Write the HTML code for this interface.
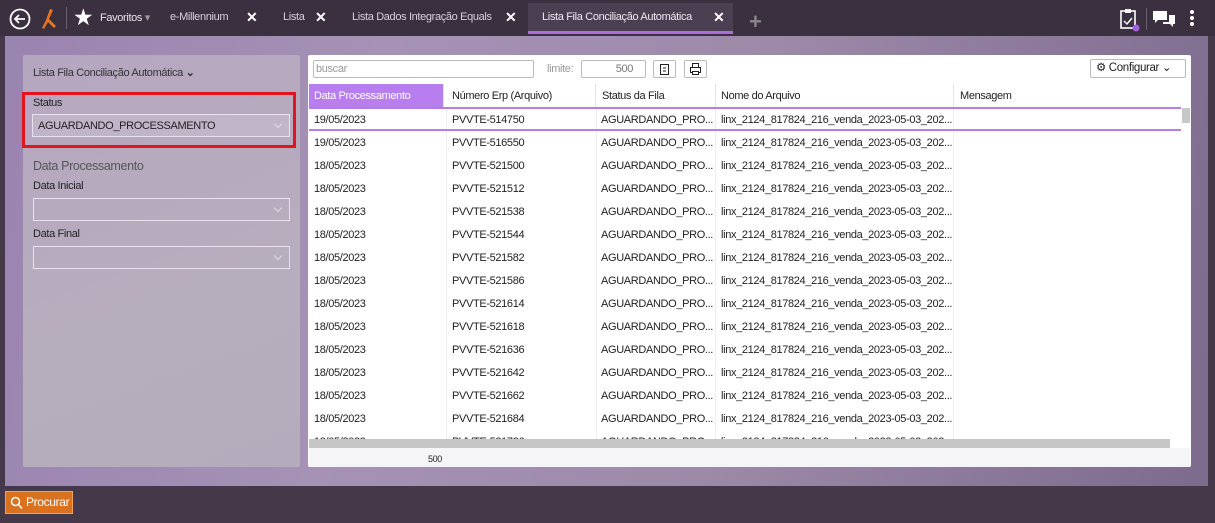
<!DOCTYPE html>
<html><head><meta charset="utf-8"><style>
*{box-sizing:border-box;margin:0;padding:0}
body{width:1215px;height:523px;overflow:hidden;background:#453848;font-family:"Liberation Sans",sans-serif;position:relative;font-size:11px;letter-spacing:-0.35px}
.top{position:absolute;left:0;top:0;width:1215px;height:36px;background:#3b3040}
.tab{position:absolute;top:11px;color:#d8d0dc;font-size:11px}
.x{position:absolute;top:9px;color:#fff;font-size:14px;font-weight:bold}
.main{position:absolute;left:5px;top:36px;width:1203px;height:450px;background:linear-gradient(100deg,#9a84b0 0%,#a592b5 30%,#9d8aa8 60%,#7d6b8e 100%)}
.lp{position:absolute;left:23px;top:55px;width:277px;height:412px;background:linear-gradient(160deg,#b5a6c0,#b7aebd 60%,#b4acbc);border-radius:2px}
.lbl{position:absolute;color:#222;font-size:11px}
.inp{position:absolute;border:1px solid #e8e2ec;height:23px}
.chev{position:absolute;right:8px;top:6px;width:6px;height:6px;border-right:1px solid #ddd;border-bottom:1px solid #ddd;transform:rotate(45deg)}
.rp{position:absolute;left:308px;top:55px;width:883px;height:412px;background:#fff;border-radius:2px}
.hdr{position:absolute;top:84px;height:23px;color:#222;font-size:11px;line-height:24px;padding-left:5px;border-right:1px solid #e4e4e4}
.row{position:absolute;left:309px;width:872px;height:23px;font-size:11px;color:#222;line-height:24px}
.row span{position:absolute;top:0}
.vl{position:absolute;top:107px;height:332px;width:1px;background:#eee}
</style></head><body>
<div class="top">
<svg style="position:absolute;left:9px;top:8px" width="22" height="22" viewBox="0 0 22 22"><circle cx="11" cy="11" r="9.5" fill="none" stroke="#fff" stroke-width="1.8"/><path d="M16 11H6M10 7l-4 4 4 4" fill="none" stroke="#fff" stroke-width="1.8"/></svg>
<svg style="position:absolute;left:40px;top:7px" width="20" height="24" viewBox="0 0 20 24"><path d="M10 2l3 1-4 9 7 7-2 2-6-6-4 7-2-1 4-8z" fill="#e8761f"/></svg>
<div style="position:absolute;left:66px;top:7px;width:1px;height:22px;background:#6a5e70"></div>
<div style="position:absolute;left:73px;top:4px;color:#fff;font-size:23px">★</div>
<div class="tab" style="left:100px;color:#e8e0ea">Favoritos <span style="color:#999">▾</span></div>
<div class="tab" style="left:170px">e-Millennium</div><div class="x" style="left:246px">✕</div>
<div class="tab" style="left:283px">Lista</div><div class="x" style="left:315px">✕</div>
<div class="tab" style="left:352px">Lista Dados Integração Equals</div><div class="x" style="left:505px">✕</div>
<div style="position:absolute;left:528px;top:3px;width:205px;height:31px;background:#4b3f52;border-bottom:3px solid #a770d8"></div>
<div class="tab" style="left:542px;color:#f0e8f4">Lista Fila Conciliação Automática</div><div class="x" style="left:713px">✕</div>
<div style="position:absolute;left:749px;top:9px;color:#888;font-size:22px;font-weight:bold">+</div>
<svg style="position:absolute;left:1118px;top:8px" width="24" height="24" viewBox="0 0 24 24"><rect x="3" y="3" width="14" height="17" fill="none" stroke="#fff" stroke-width="1.6"/><rect x="7" y="1" width="6" height="4" fill="#fff"/><path d="M6 13l3 3 5-6" fill="none" stroke="#fff" stroke-width="1.4"/><circle cx="18" cy="20" r="3.5" fill="#a45ee0"/></svg>
<div style="position:absolute;left:1146px;top:8px;width:1px;height:22px;background:#6a5e70"></div>
<svg style="position:absolute;left:1152px;top:10px" width="24" height="18" viewBox="0 0 24 18"><path d="M1 1h14v9H6l-3 3v-3H1z" fill="#fff"/><path d="M17 5h6v9h-2v3l-3-3h-7v-2h6z" fill="#fff"/></svg>
<div style="position:absolute;left:1190px;top:10px;width:4px;height:4px;border-radius:2px;background:#fff;box-shadow:0 6px 0 #fff,0 12px 0 #fff"></div>
</div>
<div class="main"></div>
<div class="lp">
<div class="lbl" style="left:10px;top:11px;color:#333">Lista Fila Conciliação Automática <b style="font-size:11px">⌄</b></div>
<div class="lbl" style="left:10px;top:42px">Status</div>
<div class="inp" style="left:9px;top:59px;width:258px;background:rgba(255,255,255,.15)"><span style="position:absolute;left:5px;top:5px;font-size:11px;color:#222">AGUARDANDO_PROCESSAMENTO</span><div class="chev"></div></div>
<div class="lbl" style="left:10px;top:104px;font-size:12.5px;color:#555">Data Processamento</div>
<div class="lbl" style="left:10px;top:125px">Data Inicial</div>
<div class="inp" style="left:10px;top:143px;width:257px"><div class="chev"></div></div>
<div class="lbl" style="left:10px;top:173px">Data Final</div>
<div class="inp" style="left:10px;top:191px;width:257px"><div class="chev"></div></div>
</div>
<div style="position:absolute;left:22px;top:92px;width:274px;height:56px;border:3px solid #e3141c"></div>
<div class="rp"></div>
<div style="position:absolute;left:313px;top:60px;width:221px;height:18px;border:1px solid #bbb;border-radius:2px;color:#999;font-size:11px;padding-left:2px;line-height:16px">buscar</div>
<div style="position:absolute;left:547px;top:63px;color:#999;font-size:11px">limite:</div>
<div style="position:absolute;left:581px;top:60px;width:65px;height:18px;border:1px solid #bbb;border-radius:2px;color:#777;font-size:11px;text-align:right;padding-right:12px;line-height:16px">500</div>
<div style="position:absolute;left:653px;top:60px;width:23px;height:18px;border:1px solid #bbb;border-radius:2px"><svg width="21" height="16" viewBox="0 0 21 16"><rect x="6.5" y="3.5" width="8" height="10" fill="none" stroke="#222"/><path d="M9 7h3M9 10h3" stroke="#222"/></svg></div>
<div style="position:absolute;left:684px;top:60px;width:23px;height:18px;border:1px solid #bbb;border-radius:2px"><svg width="21" height="16" viewBox="0 0 21 16"><rect x="7.5" y="2.5" width="6" height="4" fill="none" stroke="#222"/><rect x="5.5" y="6.5" width="10" height="5" fill="none" stroke="#222"/><rect x="7.5" y="10.5" width="6" height="3" fill="#fff" stroke="#222"/></svg></div>
<div style="position:absolute;left:1090px;top:59px;width:96px;height:19px;border:1px solid #bbb;border-radius:2px;font-size:11.5px;line-height:17px;padding-left:5px;color:#222">⚙ Configurar ⌄</div>
<div class="hdr" style="left:309px;width:135px;background:#b87ef0;color:#fff">Data Processamento</div>
<div class="hdr" style="left:447px;width:149px">Número Erp (Arquivo)</div>
<div class="hdr" style="left:597px;width:119px">Status da Fila</div>
<div class="hdr" style="left:716px;width:238px">Nome do Arquivo</div>
<div class="hdr" style="left:955px;width:226px;border:none">Mensagem</div>
<div class="vl" style="left:446px"></div><div class="vl" style="left:596px"></div><div class="vl" style="left:715px"></div><div class="vl" style="left:953px"></div>
<div style="position:absolute;left:309px;top:107px;width:872px;height:24px;border-top:2px solid #b77de6;border-bottom:2px solid #b77de6"></div>
<div style="position:absolute;left:1182px;top:108px;width:8px;height:15px;background:#c8c8c8"></div>
<div id="rows"></div>
<div style="position:absolute;left:309px;top:439px;width:861px;height:9px;background:#c6c6c6"></div>
<div style="position:absolute;left:309px;top:448px;width:881px;height:19px;background:#f5f4f6"></div>
<div style="position:absolute;left:428px;top:454px;font-size:9px;color:#222">500</div>
<div style="position:absolute;left:5px;top:491px;width:68px;height:23px;background:#d9711f;border:1px solid #f0a060;color:#fff;font-size:12px;line-height:21px;padding-left:20px">Procurar
<svg style="position:absolute;left:4px;top:4px" width="13" height="14" viewBox="0 0 13 14"><circle cx="5.5" cy="5.5" r="4" fill="none" stroke="#fff" stroke-width="1.5"/><path d="M8.5 8.5l3.5 4" stroke="#fff" stroke-width="1.5"/></svg></div>
<script>
var n=[514750,516550,521500,521512,521538,521544,521582,521586,521614,521618,521636,521642,521662,521684,521726],h='';
for(var i=0;i<n.length;i++){var t=108+i*23;h+='<div class="row" style="top:'+t+'px"><span style="left:5px">'+(i<2?'19':'18')+'/05/2023</span><span style="left:143px">PVVTE-'+n[i]+'</span><span style="left:292px">AGUARDANDO_PRO...</span><span style="left:412px">linx_2124_817824_216_venda_2023-05-03_202...</span></div>';}
document.getElementById('rows').innerHTML=h;
</script>
</body></html>
